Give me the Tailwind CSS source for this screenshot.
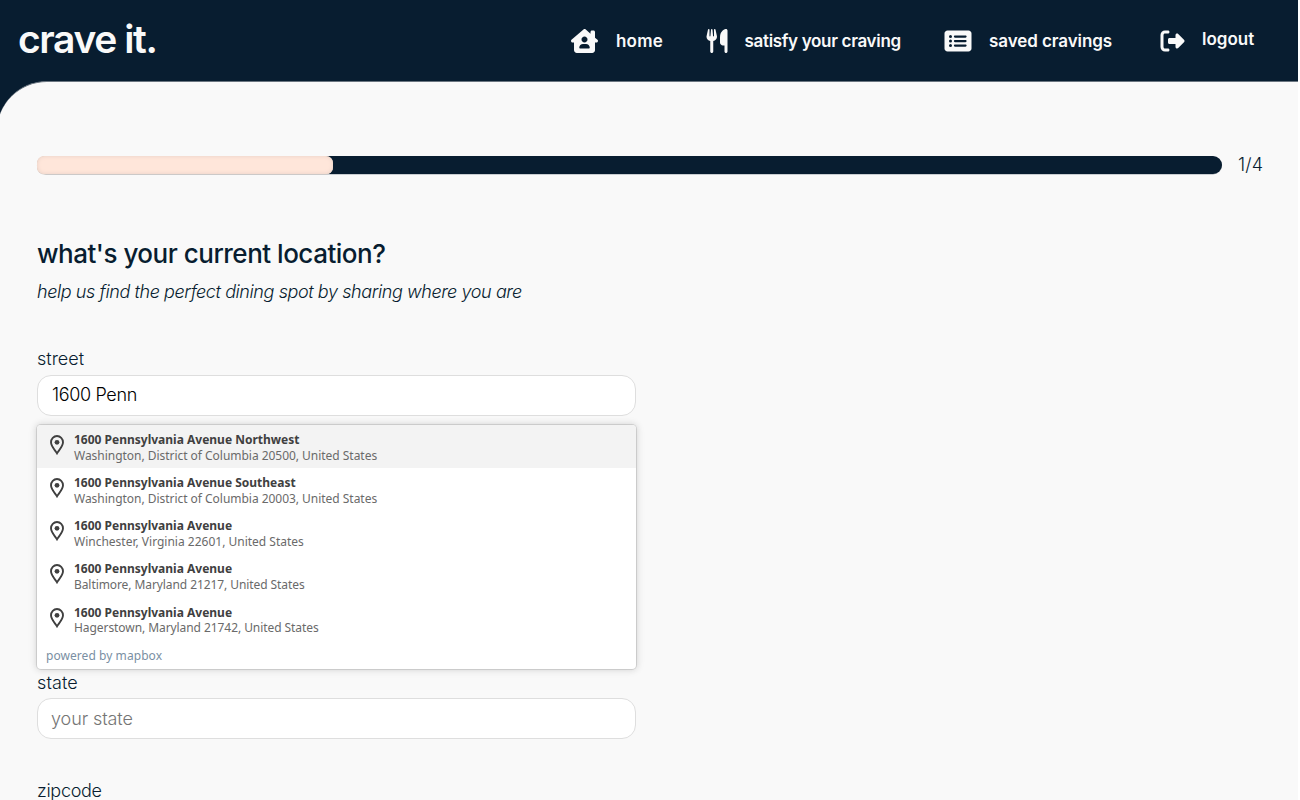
<!DOCTYPE html>
<html lang="en">
<head>
<meta charset="utf-8">
<title>crave it.</title>
<script src="https://cdn.jsdelivr.net/npm/@tailwindcss/browser@4"></script>
</head>
<body class="bg-white font-['Inter',sans-serif] text-[#081d30]">
<div class="h-[800px] w-[1298px] overflow-hidden bg-[#081d30]">
<header class="flex h-[81px] items-center text-[#f9f9f9]">
  <div class="w-[553px] shrink-0 pb-[3px] pl-[18px] text-[39px] leading-[48px] font-semibold tracking-[-1.4px]">crave it.</div>
  <nav class="flex h-full flex-1 items-center text-[17px] leading-6 font-semibold">
    <a class="flex w-[134px] items-center pl-[18px]"><svg class="h-6 w-[27px]" viewBox="0 0 576 512" fill="currentColor" fill-rule="evenodd"><path d="M575.8 255.5c0 18-15 32.1-32 32.1h-32l.7 160.2c.2 35.5-28.5 64.3-64 64.3H128.1c-35.3 0-64-28.7-64-64V287.6H32c-18 0-32-14-32-32.1c0-9 3-17 10-24L266.4 8c7-7 15-8 22-8s15 2 21 7L416 100.7V64c0-17.7 14.3-32 32-32h32c17.7 0 32 14.3 32 32V185l52.8 46.4c8 7 12 15 11 24zM352 224c0-35.3-28.7-64-64-64s-64 28.7-64 64s28.7 64 64 64s64-28.7 64-64zm-96 96c-44.2 0-80 35.8-80 80c0 8.8 7.2 16 16 16H384c8.8 0 16-7.2 16-16c0-44.2-35.8-80-80-80H256z"/></svg><span class="ml-[18px] tracking-[0.2px] whitespace-nowrap">home</span></a>
    <a class="flex w-[239px] items-center pl-[19px]"><svg class="h-6 w-[22px]" viewBox="0 0 448 512" fill="currentColor"><path d="M416 0C400 0 288 32 288 176V288c0 35.3 28.7 64 64 64h32V480c0 17.7 14.3 32 32 32s32-14.3 32-32V352 240 32c0-17.7-14.3-32-32-32zM64 16C64 7.8 57.9 1 49.7 .1S34.2 4.6 32.4 12.5L2.1 148.8C.7 155.1 0 161.5 0 167.9c0 45.9 35.1 83.6 80 87.7V480c0 17.7 14.3 32 32 32s32-14.3 32-32V255.6c44.9-4.1 80-41.8 80-87.7c0-6.4-.7-12.8-2.1-19.1L191.6 12.5c-1.8-8-9.3-13.3-17.4-12.4S160 7.8 160 16V150.2c0 5.4-4.4 9.8-9.8 9.8c-5.1 0-9.3-3.9-9.8-9L127.9 14.6C127.2 6.3 120.3 0 112 0s-15.2 6.3-15.9 14.6L83.7 151c-.5 5.1-4.7 9-9.8 9c-5.4 0-9.8-4.4-9.8-9.8V16z"/></svg><span class="ml-[16.5px] tracking-[-0.32px] whitespace-nowrap">satisfy your craving</span></a>
    <a class="flex w-[216px] items-center pl-[18px]"><svg class="h-6 w-[28px]" viewBox="0 0 576 512" fill="currentColor" fill-rule="evenodd"><path d="M0 96C0 60.7 28.7 32 64 32H512c35.3 0 64 28.7 64 64V416c0 35.3-28.7 64-64 64H64c-35.3 0-64-28.7-64-64V96zM128 288a32 32 0 1 0 0-64 32 32 0 1 0 0 64zm32-128a32 32 0 1 0 -64 0 32 32 0 1 0 64 0zM128 384a32 32 0 1 0 0-64 32 32 0 1 0 0 64zm96-248c-13.3 0-24 10.7-24 24s10.7 24 24 24H448c13.3 0 24-10.7 24-24s-10.7-24-24-24H224zm0 96c-13.3 0-24 10.7-24 24s10.7 24 24 24H448c13.3 0 24-10.7 24-24s-10.7-24-24-24H224zm0 96c-13.3 0-24 10.7-24 24s10.7 24 24 24H448c13.3 0 24-10.7 24-24s-10.7-24-24-24H224z"/></svg><span class="ml-[17px] tracking-[-0.08px] whitespace-nowrap">saved cravings</span></a>
    <a class="flex items-center pl-[18px]"><svg class="h-6 w-[25px]" viewBox="0 0 512 512" fill="currentColor"><path d="M377.9 105.9L500.7 228.7c7.2 7.2 11.3 17.1 11.3 27.3s-4.1 20.1-11.3 27.3L377.9 406.1c-6.4 6.4-15 9.9-24 9.9c-18.7 0-33.9-15.2-33.9-33.9l0-62.1-128 0c-17.7 0-32-14.3-32-32l0-64c0-17.7 14.3-32 32-32l128 0 0-62.1c0-18.7 15.2-33.9 33.9-33.9c9 0 17.6 3.6 24 9.9zM160 96L96 96c-17.7 0-32 14.3-32 32l0 256c0 17.7 14.3 32 32 32l64 0c17.7 0 32 14.3 32 32s-14.3 32-32 32l-64 0c-53 0-96-43-96-96L0 128C0 75 43 32 96 32l64 0c17.7 0 32 14.3 32 32s-14.3 32-32 32z"/></svg><span class="mb-[3px] ml-[17px] whitespace-nowrap">logout</span></a>
  </nav>
</header>
<main class="-ml-[3px] h-[719px] rounded-tl-[50px] border-t border-[#6b7681] bg-[#f9f9f9] pt-[74px] pl-10">
  <div class="flex h-[18px] items-center">
    <div class="h-[18px] w-[1185px] shrink-0 rounded-full bg-[#081d30] shadow-[0_0.5px_0_#9aa2aa]"><div class="h-full w-1/4 rounded-[7px] bg-[#ffe6da] shadow-[inset_0_0_4px_#e6d0c5,0_0.5px_0_#cfc5c0]"></div></div>
    <span class="ml-4 text-[18px] leading-6 font-light tracking-[0.2px]">1/4</span>
  </div>
  <h1 class="mt-[62px] text-[26px] leading-9 font-medium tracking-[-0.49px]">what's your current location?</h1>
  <p class="mt-[8px] text-[18px] leading-6 font-light tracking-[-0.41px] italic">help us find the perfect dining spot by sharing where you are</p>
  <form class="relative mt-[43px] w-[599px] text-[18px] font-light">
    <label class="block h-7 leading-6">street</label>
    <div class="flex h-[41px] items-center rounded-[14px] border border-[#dedede] bg-white px-[14px] pb-[2px] tracking-[-0.35px] text-black">1600 Penn</div>
    <label class="mt-[255px] block h-7 leading-6 tracking-[0.1px]">state</label>
    <div class="-mt-px flex h-[41px] items-center rounded-[14px] border border-[#dedede] bg-white px-[13px] pb-px tracking-[-0.1px] text-[#757575]">your state</div>
    <label class="mt-[40px] block h-7 leading-6 tracking-[-0.3px]">zipcode</label>
    <div class="absolute top-[78px] left-0 h-[244px] w-[599px] overflow-hidden rounded-[4px] bg-white font-['Noto_Sans',sans-serif] text-[12px] leading-[15.5px] font-normal text-[#6a6a6a] shadow-[0_0_10px_2px_rgba(0,0,0,0.05),0_0_6px_1px_rgba(0,0,0,0.1),0_0_0_1px_rgba(0,0,0,0.1)]">
      <div class="flex h-[43.3px] bg-[#f3f3f3] pt-[7px] pl-[13px]"><svg class="mt-[3px] mr-[10px] h-[20px] w-[14px]" viewBox="0 0 14 20"><path fill="none" stroke="#404040" stroke-width="1.9" d="M7 18.3C5.5 15.6 1 11.5 1 7.3a6 6.3 0 0 1 12 0c0 4.2-4.5 8.3-6 11z"/><circle cx="7" cy="7.3" r="2.4" fill="#404040"/></svg><div><div class="font-bold text-[#404040]">1600 Pennsylvania Avenue Northwest</div><div class="tracking-[-0.03px]">Washington, District of Columbia 20500, United States</div></div></div>
      <div class="flex h-[43.3px] pt-[7px] pl-[13px]"><svg class="mt-[3px] mr-[10px] h-[20px] w-[14px]" viewBox="0 0 14 20"><path fill="none" stroke="#404040" stroke-width="1.9" d="M7 18.3C5.5 15.6 1 11.5 1 7.3a6 6.3 0 0 1 12 0c0 4.2-4.5 8.3-6 11z"/><circle cx="7" cy="7.3" r="2.4" fill="#404040"/></svg><div><div class="font-bold text-[#404040]">1600 Pennsylvania Avenue Southeast</div><div class="tracking-[-0.03px]">Washington, District of Columbia 20003, United States</div></div></div>
      <div class="flex h-[43.3px] pt-[6.5px] pl-[13px]"><svg class="mt-[3px] mr-[10px] h-[20px] w-[14px]" viewBox="0 0 14 20"><path fill="none" stroke="#404040" stroke-width="1.9" d="M7 18.3C5.5 15.6 1 11.5 1 7.3a6 6.3 0 0 1 12 0c0 4.2-4.5 8.3-6 11z"/><circle cx="7" cy="7.3" r="2.4" fill="#404040"/></svg><div><div class="font-bold text-[#404040]">1600 Pennsylvania Avenue</div><div>Winchester, Virginia 22601, United States</div></div></div>
      <div class="flex h-[43.3px] pt-[6.5px] pl-[13px]"><svg class="mt-[3px] mr-[10px] h-[20px] w-[14px]" viewBox="0 0 14 20"><path fill="none" stroke="#404040" stroke-width="1.9" d="M7 18.3C5.5 15.6 1 11.5 1 7.3a6 6.3 0 0 1 12 0c0 4.2-4.5 8.3-6 11z"/><circle cx="7" cy="7.3" r="2.4" fill="#404040"/></svg><div><div class="font-bold text-[#404040]">1600 Pennsylvania Avenue</div><div class="tracking-[-0.08px]">Baltimore, Maryland 21217, United States</div></div></div>
      <div class="flex h-[43.3px] pt-[6.5px] pl-[13px]"><svg class="mt-[3px] mr-[10px] h-[20px] w-[14px]" viewBox="0 0 14 20"><path fill="none" stroke="#404040" stroke-width="1.9" d="M7 18.3C5.5 15.6 1 11.5 1 7.3a6 6.3 0 0 1 12 0c0 4.2-4.5 8.3-6 11z"/><circle cx="7" cy="7.3" r="2.4" fill="#404040"/></svg><div><div class="font-bold text-[#404040]">1600 Pennsylvania Avenue</div><div class="tracking-[-0.07px]">Hagerstown, Maryland 21742, United States</div></div></div>
      <div class="pt-[7px] pl-[9px] tracking-[0.06px] text-[#7a8fa3]">powered by mapbox</div>
    </div>
  </form>
</main>
</div>
</body>
</html>
